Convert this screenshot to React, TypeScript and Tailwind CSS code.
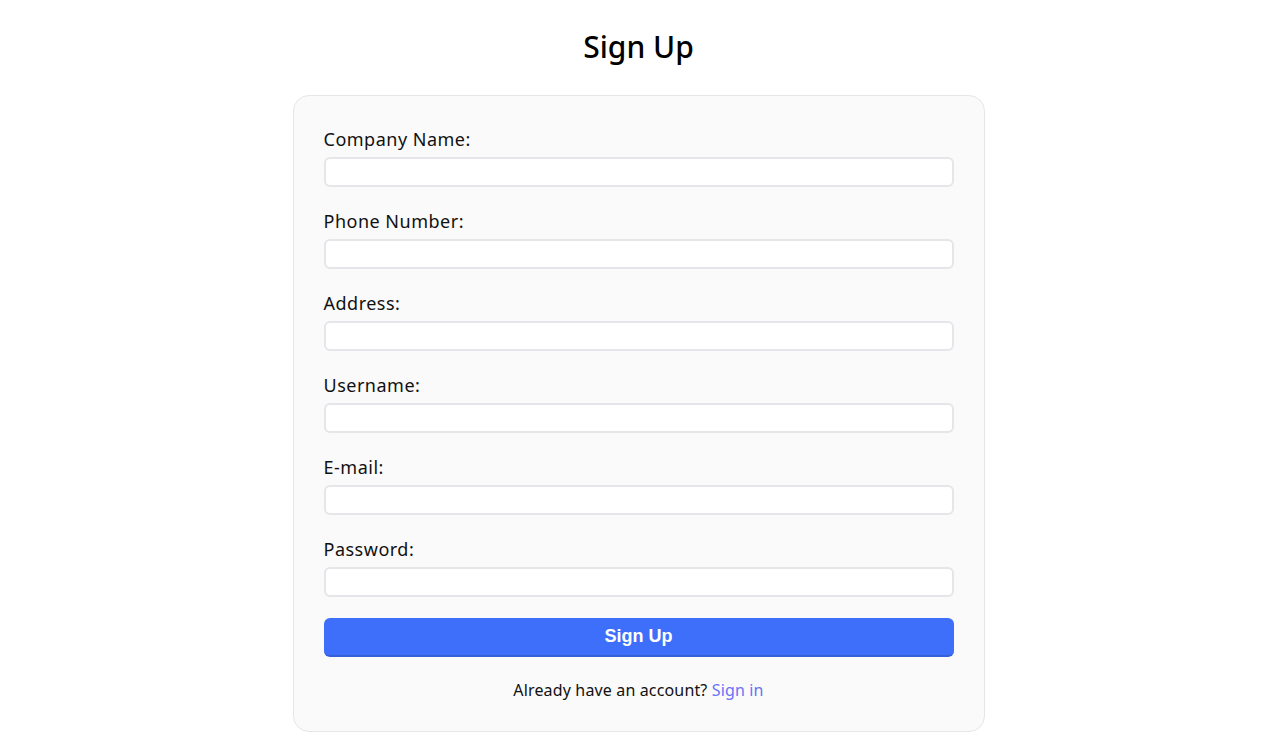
import React from 'react';

const fields = ['Company Name:', 'Phone Number:', 'Address:', 'Username:', 'E-mail:', 'Password:'];

const font = { fontFamily: "'Noto Sans', 'Open Sans', sans-serif" };

const Field: React.FC<{ label: string }> = ({ label }) => (
    <div className="flex flex-col">
        <label className="h-[24px] text-[18px] leading-[24px] tracking-[0.5px] text-[#111] mb-[6px]">{label}</label>
        <input
            type="text"
            className="h-[30px] w-full rounded-[6px] border-2 border-[#e5e5ea] bg-white px-2 outline-none"
        />
    </div>
);

export default function App() {
    return (
        <div className="min-h-screen bg-white flex flex-col items-center pl-[2px]" style={font}>
            <h1 className="mt-[26px] mb-[28px] text-[30px] leading-[41px] font-medium text-black">Sign Up</h1>
            <form
                className="w-[692px] rounded-[16px] border border-[#e6e6e6] bg-[#fafafa] px-[30px] pt-[31px] pb-[29px] flex flex-col"
                onSubmit={e => e.preventDefault()}
            >
                <div className="flex flex-col gap-[22px]">
                    {fields.map(f => (
                        <Field key={f} label={f} />
                    ))}
                </div>
                <button
                    type="submit"
                    className="mt-[21px] h-[39px] w-full rounded-[6px] bg-[#3d6ffb] border-b-2 border-[#3461d8] text-white text-[18px] font-bold"
                    style={{ fontFamily: "'Liberation Sans', Arial, sans-serif" }}
                >
                    Sign Up
                </button>
                <p className="mt-[21px] text-center text-[16px] leading-[24px] tracking-[0.15px] text-[#111]">
                    Already have an account? <a href="#" className="text-[#6a72f5]">Sign in</a>
                </p>
            </form>
        </div>
    );
}
